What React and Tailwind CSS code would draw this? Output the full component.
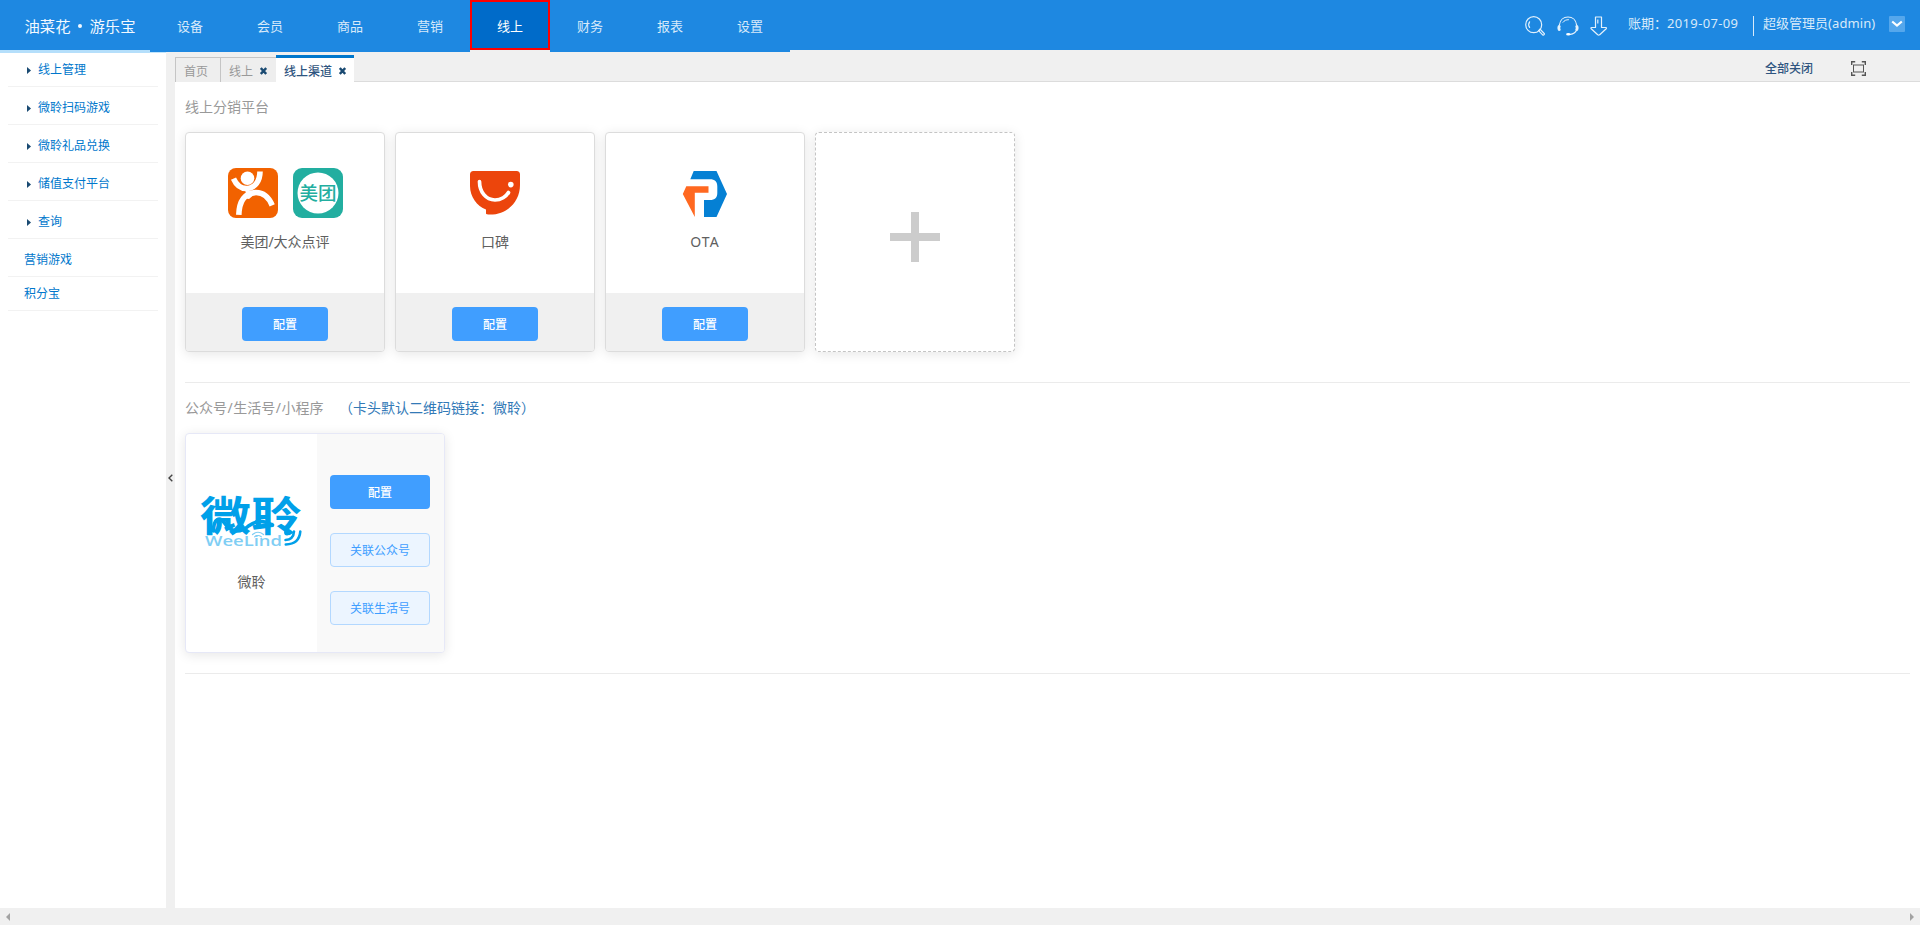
import React from 'react';

const menus = ['设备', '会员', '商品', '营销', '线上', '财务', '报表', '设置'];
const groups = ['线上管理', '微聆扫码游戏', '微聆礼品兑换', '储值支付平台', '查询'];

function SearchIcon() {
  return (
    <svg width="20" height="20" viewBox="0 0 20 20" fill="none" stroke="#e3f1fc" strokeWidth="1.2" strokeLinecap="round">
      <circle cx="8.7" cy="8.7" r="8" />
      <path d="M4.6 5.8a5 5 0 0 0 0 5.6" />
      <path d="M13.6 14.6l1.4-1.4 4 4a1 1 0 0 1-1.4 1.6z" />
    </svg>
  );
}

function HeadsetIcon() {
  return (
    <svg width="22" height="20" viewBox="0 0 22 20" fill="none" stroke="#e3f1fc" strokeLinecap="round">
      <path d="M2.4 9C3 4 6.500 1 11 1s8 3 8.600 8" strokeWidth="1.2" />
      <path d="M2.200 10.500c-.5 1-.5 2 0 3M19.800 10.500c.5 1 .5 2 0 3" strokeWidth="2.800" />
      <path d="M6 6.300C7.500 4.400 9 3.700 11.500 3.700" strokeWidth="1" />
      <path d="M19.400 14.500c-1 2.200-3.300 3.500-6 3.900" strokeWidth="1.200" />
      <ellipse cx="11.300" cy="18.200" rx="2.200" ry="1.300" fill="#fff" stroke="none" />
    </svg>
  );
}

function DownloadIcon() {
  return (
    <svg width="18" height="20" viewBox="0 0 18 20" fill="none" stroke="#e3f1fc" strokeWidth="1.200" strokeLinejoin="round">
      <path d="M5.500 1h6v10.500h4.300c.8 0 .9.700.4 1.200l-6.500 6c-.7.700-1.300.7-2 0l-6.500-6c-.5-.5-.4-1.200.4-1.200h3.900z" />
      <path d="M7.800 3.500v4" />
    </svg>
  );
}

function CloseMark() {
  return (
    <svg width="7" height="8" viewBox="0 0 7 8" stroke="#1a4a72" strokeWidth="2.400">
      <path d="M.8 1l5.400 6M6.200 1L.8 7" />
    </svg>
  );
}

function DianpingLogo() {
  return (
    <svg width="50" height="50" viewBox="0 0 50 50">
      <rect width="50" height="50" rx="8" fill="#f26200" />
      <circle cx="19.500" cy="10.300" r="6.800" fill="#fff" />
      <g fill="none" stroke="#fff" strokeWidth="5.600">
        <path d="M5.500 10.700C8.500 17.500 13 20.800 19 20.500 27 20 32 13 32 3.500" />
        <path d="M10.800 46.800C11.200 33 17 25.200 27 24.600c7.500-.4 13.500 4 17.200 12.800" />
      </g>
      <path d="M14 20l8 2.500 7 1.500-8 7-6-1 3-6z" fill="#fff" />
    </svg>
  );
}

function MeituanLogo() {
  return (
    <svg width="50" height="50" viewBox="0 0 50 50">
      <rect width="50" height="50" rx="9" fill="#22aea0" />
      <circle cx="25" cy="25" r="20.500" fill="#fff" />
      <text x="25" y="31.800" textAnchor="middle" fontSize="18.500" fontWeight="500" fill="#22aea0" fontFamily="'Noto Sans CJK SC', sans-serif">美团</text>
    </svg>
  );
}

function KoubeiLogo() {
  return (
    <svg width="50" height="50" viewBox="0 0 50 50">
      <path d="M3.500 3h43q3.500 0 3.500 3.500V17c0 17-13 29.500-30 29.500q-4 0-4-1V41.500C7 38 0 29 0 18V6.500Q0 3 3.500 3z" fill="#ec450c" />
      <path d="M9.500 13.500C9.500 24 16 32 25 32c6 0 11.300-3.500 13.500-7.500" fill="none" stroke="#fff" strokeWidth="3.700" strokeLinecap="round" />
      <circle cx="40.800" cy="16.600" r="2.800" fill="#fff" />
    </svg>
  );
}

function OtaLogo() {
  return (
    <svg width="50" height="50" viewBox="0 0 50 50">
      <path d="M13.700 3h22.800L47 26 36.500 49H24V32h6c5 0 7.300-2.500 7.300-7v-6.500c0-5-2.500-7.300-7.300-7.300H10.300z" fill="#0580d4" />
      <path d="M6.300 18.300H28.500v6.500H14.800V49L2.800 26z" fill="#ff6820" />
    </svg>
  );
}

function WeeLindLogo() {
  return (
    <svg width="102" height="54" viewBox="0 0 102 54" className="overflow-visible">
      <text x="-1" y="35.500" fontSize="41" fontWeight="700" textLength="102" lengthAdjust="spacingAndGlyphs" fill="#00a0e9" fontFamily="'Noto Sans CJK SC', sans-serif">微聆</text>
      <path d="M12.500 36c0-12 6-15 11-8 6 9 15 11 24 3 8-6 14-6 24-1" fill="none" stroke="#00a0e9" strokeWidth="3.600" strokeLinecap="round" />
      <text x="4" y="51" fontSize="14.500" fontWeight="600" textLength="77" lengthAdjust="spacingAndGlyphs" fill="#7fcef4" fontFamily="'Open Sans', sans-serif">WeeLind</text>
      <path d="M51.500 39.500q5.500-4.500 11 0M53.700 41.800q3.300-2.600 6.600 0" fill="none" stroke="#7fcef4" strokeWidth="1.200" strokeLinecap="round" />
      <circle cx="86" cy="37.500" r="2.900" fill="#00a0e9" />
      <path d="M93 36.500q-.5 8-8.500 8.500M99.300 36.500q-1 12.500-14.500 13" fill="none" stroke="#00a0e9" strokeWidth="2.600" strokeLinecap="round" />
    </svg>
  );
}

function Platform({ name, children }) {
  return (
    <div className="flex h-[220px] w-[200px] flex-col overflow-hidden rounded border border-[#dcdcdc] bg-white">
      <div className="flex h-40 flex-col items-center pt-[35px]">
        <div className="flex gap-[15px]">{children}</div>
        <div className="mt-[14px] text-sm leading-5 text-[#606060]">{name}</div>
      </div>
      <div className="flex flex-1 justify-center bg-[#f0f0f0] pt-3.5">
        <button className="h-[34px] w-[86px] rounded bg-[#409eff] pt-px text-xs font-medium text-white">配置</button>
      </div>
    </div>
  );
}

export default function App() {
  return (
    <div className="flex h-[925px] w-[1920px] flex-col overflow-hidden bg-white font-['Noto_Sans','Noto_Sans_CJK_SC',sans-serif] text-xs">
      <header className="relative z-10 flex h-[50px] shrink-0 bg-[#1e88e1]">
        <div className="h-[53px] w-[150px] border-b-[3px] border-[#b5dffb] bg-[#1e88e1] pl-[24px] pt-[15px]">
          <svg width="112" height="22" viewBox="0 0 112 22">
            <g fill="#f2f9ff" fontFamily="'Noto Sans CJK SC', sans-serif" fontSize="15">
              <text x="0.500" y="16.500" textLength="46" lengthAdjust="spacingAndGlyphs">油菜花</text>
              <text x="65.500" y="16.500" textLength="46" lengthAdjust="spacingAndGlyphs">游乐宝</text>
            </g>
            <circle cx="56" cy="11" r="2" fill="#f2f9ff" />
          </svg>
        </div>
        <nav className="flex text-[13px] text-[#d8eafa]">
          {menus.map((m) =>
            m === '线上' ? (
              <div key={m} className="flex h-[50px] w-20 items-center justify-center border-2 border-[#ff0000] bg-[#006bc9] pt-[3px] text-white">{m}</div>
            ) : (
              <div key={m} className="flex h-[52px] w-20 items-center justify-center bg-[#1e88e1] pt-px">{m}</div>
            )
          )}
        </nav>
        <div className="ml-auto flex items-start pr-[15px] text-[13px] leading-5 text-[#d8eafa]">
          <div className="mt-4 flex gap-[13px]">
            <SearchIcon />
            <div className="-ml-px"><HeadsetIcon /></div>
            <div className="-ml-0.5"><DownloadIcon /></div>
          </div>
          <div className="ml-5 mt-[13px] w-[125px] whitespace-nowrap">账期：<span className="tracking-[0.35px]">2019-07-09</span></div>
          <div className="mt-4 h-5 w-px bg-[#d8eafa]" />
          <div className="ml-[9px] mt-[13px] w-[126px] whitespace-nowrap">超级管理员<span className="tracking-[0.1px]">(admin)</span></div>
          <div className="mt-4 flex h-4 w-4 items-center justify-center rounded-[1px] bg-[#55a7ec]">
            <svg width="12" height="8" viewBox="0 0 12 8" fill="none" stroke="#fff" strokeWidth="2.200"><path d="M1.200 1.500L6 5.500l4.800-4" /></svg>
          </div>
        </div>
      </header>

      <div className="flex min-h-0 flex-1">
        <aside className="w-[166px] shrink-0 border-t-[3px] border-[#c3e5fb] px-2">
          {groups.map((g, i) => (
            <div key={g} className={`flex items-center border-b border-[#f2f2f2] pl-[19px] text-[#0077cc] ${i === 0 ? 'h-[34px]' : 'h-[38px] pt-1'}`}>
              <svg width="4" height="7" viewBox="0 0 4 7" fill="#1a4a72" className="mr-[7px] mt-px"><path d="M0 0l4 3.500L0 7z" /></svg>
              {g}
            </div>
          ))}
          <div className="flex h-[38px] items-center border-b border-[#f2f2f2] pl-4 pt-1 text-[#0077cc]">营销游戏</div>
          <div className="flex h-[34px] items-center border-b border-[#f2f2f2] pl-4 text-[#0077cc]">积分宝</div>
        </aside>
        <div className="flex w-[9px] shrink-0 items-center justify-center bg-[#f0f0f0]">
          <svg width="5" height="8" viewBox="0 0 5 8" fill="none" stroke="#444" strokeWidth="1.400" className="-ml-px -mt-0.5"><path d="M4.300.8L1 4l3.300 3.200" /></svg>
        </div>
        <main className="flex min-w-0 flex-1 flex-col">
          <div className="flex h-8 shrink-0 items-end bg-[#f0f0f0]">
            <div className="flex h-[25px] w-[45px] items-center border-l border-t border-[#c5c5c5] bg-[#eee] pl-2 pt-1 text-[#999]">首页</div>
            <div className="flex h-[25px] w-[56px] items-center border-l border-t border-[#c5c5c5] bg-[#eee] pl-2 pt-1 text-[#999]">
              线上<span className="-mt-0.5 ml-[7px]"><CloseMark /></span>
            </div>
            <div className="flex h-[27px] w-[78px] items-center border-t-[3px] border-[#0077cc] bg-white pl-2 pt-1 font-medium text-[#2f5580]">
              线上渠道<span className="-mt-0.5 ml-[7px]"><CloseMark /></span>
            </div>
            <div className="flex h-8 flex-1 items-center justify-end border-b border-[#dcdcdc] pr-[54px] pt-1.5 font-medium text-[#2f5580]">
              全部关闭
              <svg width="15" height="15" viewBox="0 0 15 15" fill="none" stroke="#555" className="ml-[38px]">
                <rect x="2.500" y="4" width="10" height="7" />
                <path d="M.7 4V.7h3.500M10.800.7h3.500V4M14.300 11v3.300h-3.500M4.200 14.300H.7V11" strokeWidth="1.400" />
              </svg>
            </div>
          </div>
          <section className="flex flex-1 flex-col px-2.5 pt-[15px] text-sm">
            <h2 className="h-5 leading-5 text-[#999]">线上分销平台</h2>
            <div className="mt-[15px] flex gap-2.5 [&>div]:shadow-[0_2px_12px_rgba(0,0,0,0.1)]">
              <Platform name="美团/大众点评"><DianpingLogo /><MeituanLogo /></Platform>
              <Platform name="口碑"><KoubeiLogo /></Platform>
              <Platform name={<span className="tracking-[1px]">OTA</span>}><OtaLogo /></Platform>
              <div className="flex h-[220px] w-[200px] items-center justify-center rounded border border-dashed border-[#c4c4c4] bg-white">
                <svg width="50" height="50" viewBox="0 0 50 50" fill="#ccc" className="mb-[11px]"><path d="M21 0h8v21h21v8H29v21h-8V29H0v-8h21z" /></svg>
              </div>
            </div>
            <hr className="mt-[30px] border-[#ebebeb]" />
            <div className="mt-[15px] flex h-5 leading-5">
              <h2 className="w-[154px] text-[#999]">公众号<span className="mx-[0.5px]">/</span>生活号<span className="mx-[0.5px]">/</span>小程序</h2>
              <span className="text-[#337ab7]">（卡头默认二维码链接：微聆）</span>
            </div>
            <div className="mt-[15px] flex h-[220px] w-[260px] overflow-hidden rounded border border-[#e6e8f7] bg-white shadow-[0_2px_12px_rgba(0,0,0,0.1)]">
              <div className="flex w-[131px] flex-col items-center pt-[61px] text-[#606060]">
                <WeeLindLogo />
                <div className="mt-[23px] leading-5">微聆</div>
              </div>
              <div className="flex flex-1 flex-col gap-6 bg-[#f9f9f9] pl-[13px] pt-[41px] text-xs">
                <button className="h-[34px] w-[100px] rounded bg-[#409eff] pt-px font-medium text-white">配置</button>
                <button className="h-[34px] w-[100px] rounded border border-[#b3d8ff] bg-[#ecf5ff] pt-px text-[#409eff]">关联公众号</button>
                <button className="h-[34px] w-[100px] rounded border border-[#b3d8ff] bg-[#ecf5ff] pt-px text-[#409eff]">关联生活号</button>
              </div>
            </div>
            <hr className="mt-5 border-[#ebebeb]" />
          </section>
        </main>
      </div>
      <footer className="flex h-[17px] shrink-0 items-center justify-between bg-[#f0f0f0] px-1.5">
        <svg width="4" height="8" viewBox="0 0 4 8" fill="#a3a3a3"><path d="M4 0v8L0 4z" /></svg>
        <svg width="4" height="8" viewBox="0 0 4 8" fill="#a3a3a3"><path d="M0 0v8l4-4z" /></svg>
      </footer>
    </div>
  );
}
